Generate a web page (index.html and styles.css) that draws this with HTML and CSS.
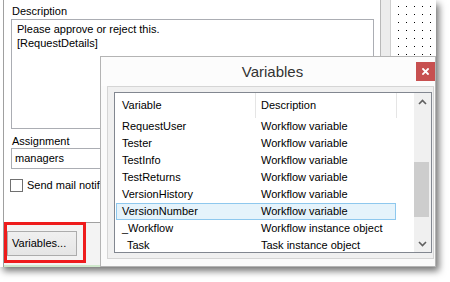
FILE: index.html
```html
<!DOCTYPE html>
<html>
<head>
<meta charset="utf-8">
<link rel="stylesheet" href="styles.css">
</head>
<body>
<div class="stage">
  <div class="window">
    <div class="form">
      <div class="fields">
        <div class="label">Description</div>
        <div class="textarea">Please approve or reject this.<br>[RequestDetails]</div>
        <div class="label label-assign">Assignment</div>
        <div class="input">managers</div>
        <div class="check"><span class="box"></span><span class="check-text">Send mail notification</span></div>
      </div>
      <div class="footer">
        <div class="button">Variables...</div>
        <div class="callout"></div>
      </div>
    </div>
    <div class="strip"></div>
    <div class="canvas"></div>
  </div>

  <div class="dialog">
    <div class="titlebar">
      <span class="title">Variables</span>
      <span class="close"><svg width="7" height="7" viewBox="0 0 7 7"><path d="M1 1L6 6M6 1L1 6" stroke="#fff" stroke-width="1.8" stroke-linecap="square"/></svg></span>
    </div>
    <div class="dbody">
      <div class="client">
        <div class="list">
          <div class="grid">
            <div class="head">
              <div class="hc hc1">Variable</div>
              <div class="hc hc2">Description</div>
              <div class="hc hfill"></div>
            </div>
            <div class="row"><div class="c1">RequestUser</div><div class="c2">Workflow variable</div></div>
            <div class="row"><div class="c1">Tester</div><div class="c2">Workflow variable</div></div>
            <div class="row"><div class="c1">TestInfo</div><div class="c2">Workflow variable</div></div>
            <div class="row"><div class="c1">TestReturns</div><div class="c2">Workflow variable</div></div>
            <div class="row"><div class="c1">VersionHistory</div><div class="c2">Workflow variable</div></div>
            <div class="row selected"><div class="c1">VersionNumber</div><div class="c2">Workflow variable</div></div>
            <div class="row"><div class="c1">_Workflow</div><div class="c2">Workflow instance object</div></div>
            <div class="row"><div class="c1 indent">Task</div><div class="c2">Task instance object</div></div>
          </div>
          <div class="scrollbar">
            <div class="arrow"><svg width="9" height="6" viewBox="0 0 9 6"><path d="M1 5L4.5 1.5L8 5" fill="none" stroke="#606060" stroke-width="1.6"/></svg></div>
            <div class="track"><div class="thumb"></div></div>
            <div class="arrow"><svg width="9" height="6" viewBox="0 0 9 6"><path d="M1 1L4.5 4.5L8 1" fill="none" stroke="#606060" stroke-width="1.6"/></svg></div>
          </div>
        </div>
      </div>
    </div>
  </div>
</div>
</body>
</html>
```

FILE: styles.css
```css
* { box-sizing: border-box; }

body {
  margin: 0;
  background: #ffffff;
  font-family: "Liberation Sans", Arial, sans-serif;
  font-size: 11px;
  color: #000;
}

.stage {
  position: relative;
  width: 450px;
  height: 282px;
  overflow: hidden;
}

.window {
  display: flex;
  width: 436px;
  height: 267px;
  padding-left: 3px;
  background: #fff;
  box-shadow: 3px 4px 7px rgba(0, 0, 0, 0.55);
}

.form {
  width: 377px;
  border-left: 1px solid #a0a0a0;
  display: flex;
  flex-direction: column;
}

.fields {
  height: 223px;
  padding-top: 4px;
  border-bottom: 1px solid #a0a0a0;
}

.label {
  margin-left: 8px;
  line-height: 14px;
  color: #000;
}

.label-assign { margin-top: 5px; }

.textarea {
  margin-top: 1px;
  margin-left: 7px;
  width: 363px;
  height: 110px;
  border: 1px solid #abadb3;
  background: #fff;
  padding: 2px 5px;
  line-height: 14px;
}

.input {
  margin-left: 7px;
  width: 363px;
  height: 21px;
  border: 1px solid #abadb3;
  background: #fff;
  padding-left: 3px;
  line-height: 19px;
}

.check {
  display: flex;
  align-items: center;
  margin-top: 9px;
  margin-left: 6px;
  gap: 4px;
}

.box {
  width: 13px;
  height: 13px;
  border: 1px solid #707070;
  background: #fff;
}

.check-text { line-height: 14px; }

.footer {
  position: relative;
  flex: 1;
  background: #f3f3f3;
  padding-top: 8px;
  padding-left: 3px;
  border-bottom: 2px solid #cfe8cc;
}

.button {
  width: 70px;
  height: 25px;
  border: 1px solid #acacac;
  background: linear-gradient(#f0f0f0, #e5e5e5);
  line-height: 23px;
  padding-left: 4px;
  color: #000;
}

.callout {
  position: absolute;
  left: 0;
  top: -1px;
  width: 82px;
  height: 41px;
  border: 3px solid #ee1c1c;
}

.strip {
  width: 11px;
  border-left: 1px solid #b8b8b8;
  border-right: 1px solid #d0d0d0;
  background: #ececec;
}

.canvas {
  flex: 1;
  background-color: #fff;
  background-image:
    linear-gradient(#fff 7px, transparent 7px),
    linear-gradient(90deg, #fff 7px, #000 7px);
  background-size: 8px 8px;
  background-position: 0 -1px;
}

/* dialog */
.dialog {
  position: absolute;
  left: 100px;
  top: 56px;
  width: 336px;
  height: 211px;
  border: 1px solid #b4b4b4;
  background: #fafafa;
  display: flex;
  flex-direction: column;
}

.titlebar {
  position: relative;
  height: 29px;
  display: flex;
  align-items: center;
  justify-content: center;
  padding-left: 9px;
  background: #fcfcfc;
}

.title {
  font-size: 15px;
  color: #333;
}

.close {
  position: absolute;
  right: 0;
  top: 5px;
  width: 19px;
  height: 19px;
  background: #c75050;
  display: flex;
  align-items: center;
  justify-content: center;
}

.dbody {
  flex: 1;
  padding: 0 1px 7px 6px;
  display: flex;
}

.client {
  flex: 1;
  border: 1px solid #d5d5d5;
  background: #f0f0f0;
  padding: 5px 1px 5px 6px;
}

.list {
  height: 161px;
  border: 1px solid #828790;
  background: #fff;
  display: flex;
  overflow: hidden;
}

.grid {
  width: 299px;
}

.head {
  display: flex;
  height: 25px;
  line-height: 25px;
}

.hc1 {
  width: 141px;
  padding-left: 7px;
  border-right: 1px solid #e5e5e5;
}

.hc2 {
  width: 141px;
  padding-left: 5px;
  border-right: 1px solid #e5e5e5;
}

.hfill { flex: 1; }

.row {
  display: flex;
  width: 280px;
  height: 17px;
  margin-left: 1px;
  border: 1px solid transparent;
  line-height: 15px;
  white-space: nowrap;
}

.row.selected {
  background: #e5f3fb;
  border-color: #8ec8ee;
}

.c1 {
  width: 138px;
  padding-left: 5px;
}

.c1.indent { padding-left: 10px; }

.c2 {
  flex: 1;
  padding-left: 6px;
}

.scrollbar {
  width: 17px;
  background: #f0f0f0;
  display: flex;
  flex-direction: column;
}

.arrow {
  height: 17px;
  display: flex;
  align-items: center;
  justify-content: center;
}

.track {
  flex: 1;
  padding-top: 52px;
}

.thumb {
  width: 15px;
  height: 55px;
  background: #cdcdcd;
}
```
